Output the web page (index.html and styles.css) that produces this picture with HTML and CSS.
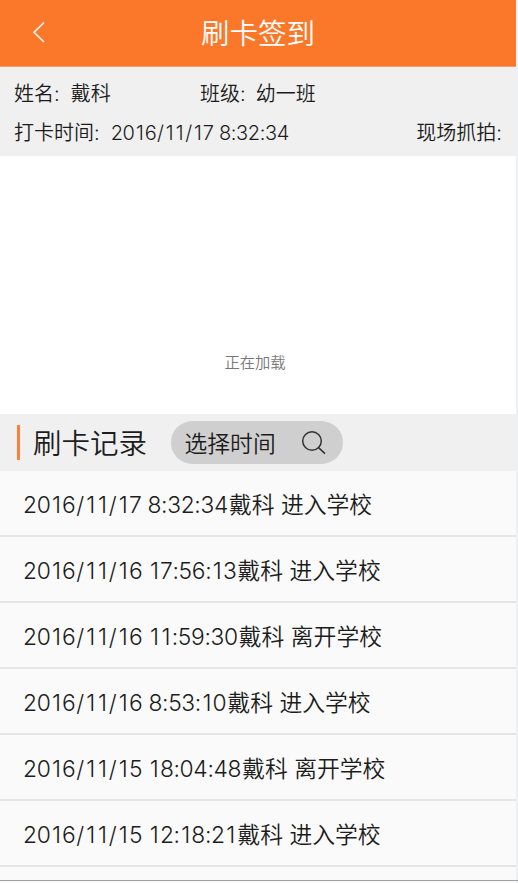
FILE: index.html
```html
<!DOCTYPE html>
<html lang="zh-CN">
<head>
<meta charset="utf-8">
<title>刷卡签到</title>
<link rel="stylesheet" href="styles.css">
</head>
<body>
<div class="screen">
  <header class="topbar">
    <svg class="back" viewBox="0 0 14 24" width="14" height="24"><path d="M12 2.500 2 12.300l10 9.700"/></svg>
    <h1>刷卡签到</h1>
  </header>
  <section class="info">
    <div class="line"><span class="name">姓名:&ensp;<span class="value">戴科</span></span><span>班级:&ensp;幼一班</span></div>
    <div class="line"><span>打卡时间:&ensp;<span class="time value">2016/11/17 8:32:34</span></span><span class="photo-label">现场抓拍:</span></div>
  </section>
  <section class="photo"><span>正在加载</span></section>
  <section class="records-head">
    <h2>刷卡记录</h2>
    <button class="pick"><span>选择时间</span><svg viewBox="0 0 26 26" width="26" height="26"><circle cx="11" cy="11" r="9.300"/><path d="m17.600 17.600 6.400 6"/></svg></button>
  </section>
  <ul class="records">
    <li><span class="time">2016/11/17 8:32:34</span>戴科 进入学校</li>
    <li><span class="time">2016/11/16 17:56:13</span>戴科 进入学校</li>
    <li><span class="time">2016/11/16 11:59:30</span>戴科 离开学校</li>
    <li><span class="time">2016/11/16 8:53:10</span>戴科 进入学校</li>
    <li><span class="time">2016/11/15 18:04:48</span>戴科 离开学校</li>
    <li><span class="time">2016/11/15 12:18:21</span>戴科 进入学校</li>
  </ul>
  <div class="foot"></div>
</div>
<script src="script.js"></script>
</body>
</html>
```
FILE: styles.css
```css
* { box-sizing: border-box; }
body {
  margin: 0;
  height: 883px;
  overflow: hidden;
  background: #edf1f7;
  color: #1c1c1c;
  font-family: Inter, "Noto Sans CJK SC", sans-serif;
  font-weight: 350;
}
.screen { width: 516px; height: 883px; display: flex; flex-direction: column; background: #fafafa; }
h1, h2 { margin: 0; font-weight: 350; }
.topbar {
  height: 67px;
  flex: none;
  display: grid;
  grid-template-columns: 80px 1fr 80px;
  align-items: center;
  background: #fb782b;
  border-bottom: 1px solid #fa9e69;
  color: #fff;
}
.back { margin: -2px 0 0 32px; fill: none; stroke: #fff3ea; stroke-width: 1.700; }
.topbar h1 { padding-top: 2px; font-size: 28.500px; line-height: 40px; text-align: center; }
.info { height: 89px; flex: none; padding: 6px 14px 0; background: #f0f0f0; font-size: 20px; }
.line { height: 39px; display: flex; align-items: center; white-space: nowrap; }
.name { width: 186px; }
.value { margin-left: 1px; }
.photo-label { margin-left: auto; }
.time { font-weight: 300; font-kerning: none; letter-spacing: -0.018em; }
.one { margin: 0 0.066em; }
.slash { margin: 0 0.035em; }
.photo { height: 258px; flex: none; background: #fff; display: flex; justify-content: center; align-items: flex-end; padding: 0 6px 40px 0; color: #777; font-size: 15.300px; line-height: 22px; }
.records-head { height: 57px; flex: none; display: flex; align-items: center; padding-left: 17px; background: #f0f0f0; }
.records-head h2 { height: 35px; padding: 2px 0 0 13px; border-left: 3px solid #fb8038; font-size: 28.500px; line-height: 33px; white-space: nowrap; }
.pick { width: 172px; height: 43px; margin-left: 23.500px; padding: 0 16px 0 14px; border: 0; border-radius: 22px; background: #cfcfcf; display: flex; align-items: center; justify-content: space-between; color: inherit; font: inherit; font-size: 22.800px; }
.pick svg { fill: none; stroke: #333; stroke-width: 1.500; }
.records { margin: 0; padding: 0; list-style: none; }
.records li { height: 66px; display: flex; align-items: center; padding: 1px 0 0 23px; border-bottom: 2px solid #e5e5e5; font-size: 22.800px; white-space: pre; }
.records .time { padding: 1px 1px 0 0; letter-spacing: -0.014em; }
.foot { height: 14px; margin-right: -2px; border-bottom: 1px solid #a0a0a0; background: linear-gradient(90deg, #fafafa 516px, #edf1f7 516px); }
```
FILE: script.js
```js
// Even out the narrow "1" and "/" glyphs in timestamps.
document.querySelectorAll('.time').forEach(function (el) {
  el.innerHTML = el.textContent.replace(/[1\/]/g, function (c) {
    return '<span class="' + (c === '1' ? 'one' : 'slash') + '">' + c + '</span>';
  });
});
```
